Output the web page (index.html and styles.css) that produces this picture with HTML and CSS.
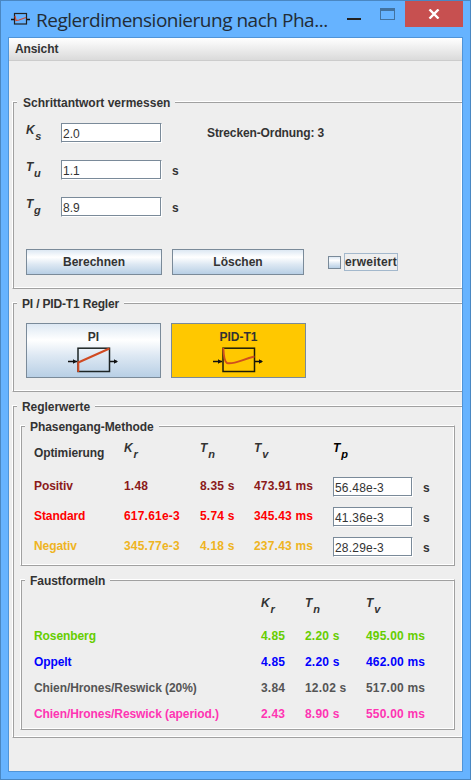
FILE: index.html
```html
<!DOCTYPE html>
<html lang="de">
<head>
<meta charset="utf-8">
<title>Reglerdimensionierung</title>
<link rel="stylesheet" href="styles.css">
</head>
<body>
<div class="window">
  <header class="titlebar">
    <svg class="app-icon" width="20" height="14" viewBox="0 0 20 14"><path d="M0 7.5H3M16 7.5H19" stroke="#111" stroke-width="1.4"/><rect x="3.5" y="1.5" width="12" height="10.5" fill="none" stroke="#222" stroke-width="1.2"/><path d="M4 4L5 8.5L8 8L15 5.5" fill="none" stroke="#d8492a" stroke-width="1.2"/></svg>
    <h1 class="title">Reglerdimensionierung nach Pha...</h1>
    <span class="win-min"></span>
    <span class="win-max"></span>
    <span class="win-close"><svg width="12" height="10" viewBox="0 0 12 10"><path d="M1.5 0.5L10.5 9.5M10.5 0.5L1.5 9.5" stroke="#fff" stroke-width="2.4"/></svg></span>
  </header>
  <main class="client">
    <nav class="menubar"><span>Ansicht</span></nav>

    <section class="group measure">
      <h2 class="legend">Schrittantwort vermessen</h2>
      <div class="param"><span class="sym">K<sub>s</sub></span><span class="field">2.0</span><span class="order">Strecken-Ordnung: 3</span></div>
      <div class="param"><span class="sym">T<sub>u</sub></span><span class="field">1.1</span><span class="unit">s</span></div>
      <div class="param"><span class="sym">T<sub>g</sub></span><span class="field">8.9</span><span class="unit">s</span></div>
      <div class="actions">
        <button class="btn calc">Berechnen</button>
        <button class="btn clear">Löschen</button>
        <label class="check"><i class="box"></i><span class="check-text">erweitert</span></label>
      </div>
    </section>

    <section class="group controller">
      <h2 class="legend">PI / PID-T1 Regler</h2>
      <div class="types">
        <button class="btn type">PI
          <svg width="50" height="26" viewBox="0 0 50 26"><path d="M0 14.5H9M42 14.5H49" stroke="#111" stroke-width="1.3"/><path d="M5 12.3L9 14.5L5 16.7ZM46 12.3L50 14.5L46 16.7Z" fill="#111"/><rect x="10" y="1.2" width="31.5" height="23.3" fill="none" stroke="#1c2424" stroke-width="1.5"/><path d="M10.3 25V15.5L41.5 1.5" fill="none" stroke="#d04a22" stroke-width="2"/></svg>
        </button>
        <button class="btn type active">PID-T1
          <svg width="50" height="26" viewBox="0 0 50 26"><path d="M0 14.5H9M42 14.5H49" stroke="#111" stroke-width="1.3"/><path d="M5 12.3L9 14.5L5 16.7ZM46 12.3L50 14.5L46 16.7Z" fill="#111"/><rect x="10" y="1.2" width="31.5" height="23.3" fill="none" stroke="#1c1c08" stroke-width="1.5"/><path d="M10.3 1C10.6 8 11 14.5 14 16C20 18 28 13 41.5 9.5" fill="none" stroke="#d0501e" stroke-width="2"/></svg>
        </button>
      </div>
    </section>

    <section class="group values">
      <h2 class="legend">Reglerwerte</h2>
      <section class="group inner phase">
        <h3 class="legend">Phasengang-Methode</h3>
        <div class="prow head"><span class="opt">Optimierung</span><span class="sym">K<sub>r</sub></span><span class="sym">T<sub>n</sub></span><span class="sym">T<sub>v</sub></span><span class="sym black">T<sub>p</sub></span></div>
        <div class="prow"><span class="name positive">Positiv</span><span class="positive">1.48</span><span class="positive">8.35 s</span><span class="positive">473.91 ms</span><span class="field">56.48e-3</span><span class="unit">s</span></div>
        <div class="prow"><span class="name standard">Standard</span><span class="standard">617.61e-3</span><span class="standard">5.74 s</span><span class="standard">345.43 ms</span><span class="field">41.36e-3</span><span class="unit">s</span></div>
        <div class="prow"><span class="name negative">Negativ</span><span class="negative">345.77e-3</span><span class="negative">4.18 s</span><span class="negative">237.43 ms</span><span class="field">28.29e-3</span><span class="unit">s</span></div>
      </section>
      <section class="group inner rules">
        <h3 class="legend">Faustformeln</h3>
        <div class="frow head"><span></span><span class="sym">K<sub>r</sub></span><span class="sym">T<sub>n</sub></span><span class="sym">T<sub>v</sub></span></div>
        <div class="frow rosenberg"><span class="name">Rosenberg</span><span>4.85</span><span>2.20 s</span><span>495.00 ms</span></div>
        <div class="frow oppelt"><span class="name">Oppelt</span><span>4.85</span><span>2.20 s</span><span>462.00 ms</span></div>
        <div class="frow chien"><span class="name">Chien/Hrones/Reswick (20%)</span><span>3.84</span><span>12.02 s</span><span>517.00 ms</span></div>
        <div class="frow aperiodic"><span class="name">Chien/Hrones/Reswick (aperiod.)</span><span>2.43</span><span>8.90 s</span><span>550.00 ms</span></div>
      </section>
    </section>
  </main>
</div>
</body>
</html>
```
FILE: styles.css
```css
* { box-sizing: border-box; }
body { margin: 0; }
h1, h2, h3 { margin: 0; font-size: inherit; font-weight: inherit; }

.window {
  width: 471px;
  height: 780px;
  padding: 0 7px 7px;
  background: #66b3ff;
  border: 1px solid #4a87c2;
  color: #333;
  font: bold 12px/16px "Liberation Sans", Arial, sans-serif;
  white-space: nowrap;
  overflow: hidden;
}

.titlebar { display: flex; align-items: flex-start; height: 36px; }
.app-icon { flex: none; margin: 11px 0 0 3px; }
.title {
  width: 296px;
  margin: 5px 0 0 5px;
  font: 19px/28px "Open Sans", "Noto Sans", sans-serif;
  letter-spacing: -0.48px;
  color: #222c36;
}
.win-min { width: 14px; height: 2px; margin: 17px 0 0 15px; background: #222; }
.win-max { width: 15px; height: 12px; margin: 7px 0 0 19px; border: 1px solid #42729f; border-top-width: 3px; }
.win-close { display: flex; justify-content: center; align-items: center; width: 58px; height: 26px; margin-left: 10px; background: #c75050; flex: none; }

.client { height: 735px; border: 1px solid #4f94d8; background: #eee; overflow: hidden; }
.menubar { height: 23px; padding: 3px 0 0 6px; border-bottom: 1px solid #ccc; background: linear-gradient(#fff, #dadada); letter-spacing: -0.1px; }

/* Etched group frame: light and dark lines side by side */
.group {
  width: 451px;
  margin-left: 3px;
  border: 1px solid;
  border-color: #fff #a0a0a0 #a0a0a0 #fff;
  box-shadow: inset 1px 1px #a0a0a0, inset -1px -1px #fff;
}
.legend { width: max-content; height: 16px; margin: -7px 0 0 4px; padding: 0 5px; background: #eee; letter-spacing: -0.06px; }
.measure { height: 188px; margin-top: 40px; }
.controller { height: 90px; margin-top: 13px; }
.values { height: 333px; margin-top: 13px; }

.measure > .legend { padding-left: 6px; letter-spacing: 0; }
.controller > .legend { letter-spacing: -0.17px; }
.param { display: flex; height: 37px; padding-left: 13px; }
.measure > .legend + .param { margin-top: 12px; }
.param .sym { width: 35px; margin-top: -1px; }
.sym { font-style: italic; }
.sym sub { margin-left: 0.6px; font-size: 11px; line-height: 0; vertical-align: -6px; }
.black { color: #000; }

.field {
  width: 101px;
  height: 20px;
  padding: 2px 0 0 1px;
  border: 1px solid;
  border-color: #7a8a99 #fff #fff #7a8a99;
  background: #fff;
  box-shadow: inset -1px -1px #7a8a99;
  font-weight: normal;
}
.unit { margin: 3px 0 0 10px; }
.order { margin: 2px 0 0 45px; letter-spacing: -0.12px; }

.actions { display: flex; margin: 15px 0 0 13px; }
.btn {
  padding: 0;
  border: 1px solid #7a8a99;
  background: linear-gradient(#dde8f3, #fff 30%, #dde8f3 60%, #b8cfe5);
  color: #333;
  font: inherit;
}
.calc { width: 136px; height: 26px; }
.clear { width: 132px; height: 26px; margin-left: 10px; }
.check { display: flex; align-items: flex-start; margin-left: 24px; }
.box { width: 13px; height: 13px; margin-top: 7px; border: 1px solid #7a8a99; background: linear-gradient(#dde8f3, #fff 30%, #dde8f3 60%, #b8cfe5); }
.check-text { width: 54px; height: 18px; margin: 4px 0 0 3px; border: 1px solid #a3b8cc; letter-spacing: 0.2px; }

.types { display: flex; gap: 10px; margin: 11px 0 0 13px; }
.type { display: flex; flex-direction: column; align-items: center; width: 135px; height: 55px; padding-top: 5px; }
.type svg { display: block; margin: 2px 1px 0 0; }
.btn.active { background: #ffc800; }

.inner { width: 435px; margin-left: 7px; }
.phase { height: 141px; margin-top: 10px; }
.rules { height: 151px; margin-top: 13px; }
.prow, .frow { display: grid; margin-left: 13px; letter-spacing: 0.2px; }
.prow { grid-template-columns: 90px 76px 54px 79px 80px auto; height: 30px; }
.prow.head { height: 38px; margin-top: 5px; }
.prow .opt { margin-top: 5px; letter-spacing: -0.1px; }
.prow .field { width: 80px; margin-top: -1px; }
.prow .unit { margin-top: 2px; }
.frow { grid-template-columns: 227px 44px 61px auto; height: 26px; }
.frow.head { height: 33px; margin-top: 6px; }
.name { letter-spacing: -0.08px; }

.positive { color: #8b1a1a; }
.standard { color: #f00; }
.negative { color: #eeb422; }
.rosenberg { color: #66cd00; }
.oppelt { color: #00f; }
.chien { color: #555; }
.aperiodic { color: #ff34b3; }
```
